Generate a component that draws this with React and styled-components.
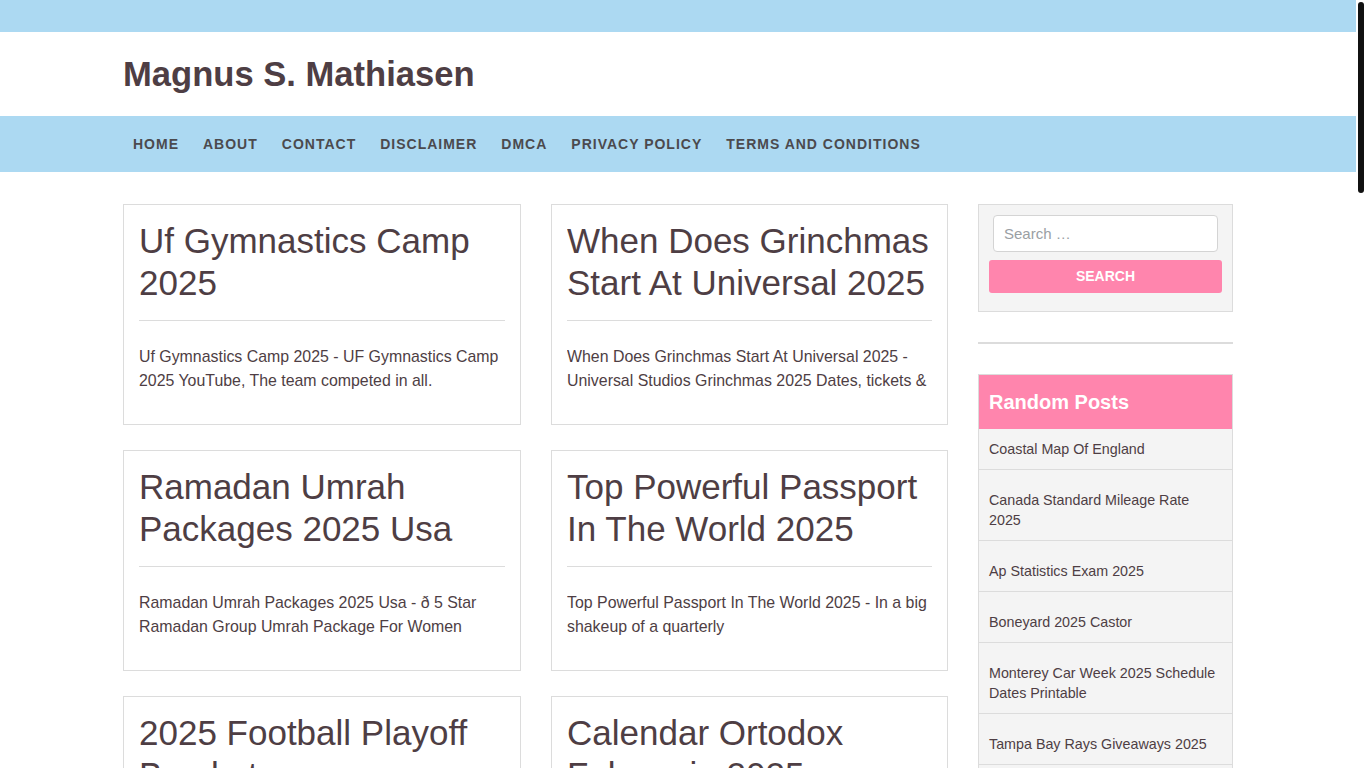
import React from "react";
import styled, { createGlobalStyle } from "styled-components";

const GlobalStyle = createGlobalStyle`
  html { background: #fff; }
  body {
    margin: 0 10px 0 0;
    font-family: "Liberation Sans", Arial, Helvetica, sans-serif;
    color: #4e3e44;
    background: #fff;
  }
  * { box-sizing: border-box; }
`;

const ScrollRail = styled.div`
  position: fixed;
  top: 0;
  right: 0;
  width: 10px;
  height: 100vh;
  background: #fff;
  z-index: 10;
`;

const ScrollThumb = styled.div`
  position: absolute;
  top: 2px;
  left: 2px;
  width: 6px;
  height: 191px;
  border-radius: 3px;
  background: #111;
`;

const Page = styled.div`
  min-height: 3025px;
  display: flex;
  flex-direction: column;
`;

const TopBar = styled.div`
  height: 32px;
  background: #acd9f2;
`;

const Container = styled.div`
  max-width: 1140px;
  margin: 0 auto;
  padding: 0 15px;
  width: 100%;
`;

const Header = styled.header`
  height: 84px;
  background: #fff;
  display: flex;
  align-items: center;
`;

const SiteTitle = styled.a`
  font-size: 34.6px;
  font-weight: 700;
  color: #4e3e44;
  text-decoration: none;
  line-height: 1;
  display: inline-block;
`;

const NavBar = styled.nav`
  height: 56px;
  background: #acd9f2;
  display: flex;
  align-items: center;
`;

const NavList = styled.ul`
  list-style: none;
  margin: 0;
  padding: 0;
  display: flex;
  gap: 4px;
`;

const NavItem = styled.li`
  a {
    display: block;
    padding: 0 10px;
    font-size: 14px;
    font-weight: 700;
    letter-spacing: 1px;
    text-transform: uppercase;
    color: #4b4a4e;
    text-decoration: none;
    line-height: 56px;
  }
`;

const Main = styled.div`
  padding-top: 32px;
  flex: 1;
`;

const Layout = styled.div`
  display: grid;
  grid-template-columns: 825px 255px;
  column-gap: 30px;
  align-items: start;
`;

const PostGrid = styled.div`
  display: grid;
  grid-template-columns: 398px 397px;
  column-gap: 30px;
  row-gap: 25px;
`;

const Card = styled.article`
  border: 1px solid #dcdcdc;
  background: #fff;
  padding: 15px;
`;

const CardTitle = styled.h2`
  margin: 0;
  font-size: 35px;
  font-weight: 400;
  line-height: 42px;
  color: #4e3e44;
  height: 84px;
  overflow: hidden;
`;

const Divider = styled.hr`
  border: 0;
  border-top: 1px solid #dcdcdc;
  margin: 16px 0 24px;
  height: 0;
`;

const Excerpt = styled.p`
  margin: 0 0 16px;
  font-size: 15.9px;
  line-height: 24px;
  color: #4e3e44;
  height: 48px;
  overflow: hidden;
`;

const Sidebar = styled.aside`
  display: flex;
  flex-direction: column;
`;

const SearchBox = styled.div`
  background: #f4f4f4;
  border: 1px solid #dcdcdc;
  padding: 10px 10px 18px;
`;

const SearchInput = styled.input`
  display: block;
  width: calc(100% - 8px);
  margin: 0 4px 8px;
  height: 37px;
  border: 1px solid #d4d4d4;
  border-radius: 4px;
  background: #fff;
  padding: 0 10px;
  font-family: "Liberation Sans", Arial, sans-serif;
  font-size: 15px;
  color: #555;
  &::placeholder { color: #9aa0a4; }
`;

const SearchButton = styled.button`
  display: block;
  width: 100%;
  height: 33px;
  border: 0;
  border-radius: 3px;
  background: #ff85ad;
  color: #fff;
  font-family: "Liberation Sans", Arial, sans-serif;
  font-size: 14px;
  font-weight: 700;
  line-height: 33px;
  padding: 0;
  text-transform: uppercase;
  cursor: pointer;
`;

const Rule = styled.div`
  height: 2px;
  background: #dcdcdc;
  margin: 30px 0;
`;

const Widget = styled.section`
  border: 1px solid #dcdcdc;
  background: #f4f4f4;
`;

const WidgetTitle = styled.h3`
  margin: 0;
  background: #ff85ad;
  color: #fff;
  font-size: 20px;
  font-weight: 700;
  line-height: 54px;
  padding: 0 10px;
`;

const PostList = styled.ul`
  list-style: none;
  margin: 0;
  padding: 0;
`;

const PostItem = styled.li`
  padding: ${(p) => (p.$first ? "10px 10px 10px" : "20px 10px 10px")};
  border-bottom: 1px solid #dcdcdc;
  font-size: 14.3px;
  line-height: 20px;
  a {
    color: #4e3e44;
    text-decoration: none;
  }
`;

const navItems = [
  "Home",
  "About",
  "Contact",
  "Disclaimer",
  "DMCA",
  "Privacy Policy",
  "Terms and Conditions",
];

const posts = [
  {
    title: "Uf Gymnastics Camp 2025",
    excerpt:
      "Uf Gymnastics Camp 2025 - UF Gymnastics Camp 2025 YouTube, The team competed in all.",
  },
  {
    title: "When Does Grinchmas Start At Universal 2025",
    excerpt:
      "When Does Grinchmas Start At Universal 2025 - Universal Studios Grinchmas 2025 Dates, tickets & more",
  },
  {
    title: "Ramadan Umrah Packages 2025 Usa",
    excerpt:
      "Ramadan Umrah Packages 2025 Usa - ð 5 Star Ramadan Group Umrah Package For Women",
  },
  {
    title: "Top Powerful Passport In The World 2025",
    excerpt:
      "Top Powerful Passport In The World 2025 - In a big shakeup of a quarterly",
  },
  {
    title: "2025 Football Playoff Bracket",
    excerpt:
      "2025 Football Playoff Bracket - College Football Playoff 2025 bracket, schedule and more",
  },
  {
    title: "Calendar Ortodox Februarie 2025",
    excerpt:
      "Calendar Ortodox Februarie 2025 - Calendar ortodox februarie 2025 sărbători",
  },
  {
    title: "Nfl Draft 2025 Mock Draft",
    excerpt:
      "Nfl Draft 2025 Mock Draft - The latest projections for the first round picks",
  },
  {
    title: "Best Family Cars 2025 Uk",
    excerpt:
      "Best Family Cars 2025 Uk - The best family cars to buy right now, reviewed",
  },
];

const randomPosts = [
  "Coastal Map Of England",
  "Canada Standard Mileage Rate 2025",
  "Ap Statistics Exam 2025",
  "Boneyard 2025 Castor",
  "Monterey Car Week 2025 Schedule Dates Printable",
  "Tampa Bay Rays Giveaways 2025",
  "Nba All Star Game 2025 Tickets",
  "Honda Civic 2025 Hybrid Price",
  "Easter Sunday 2025 Date",
  "Chelsea Flower Show 2025 Dates",
];

export default function App() {
  return (
    <>
      <GlobalStyle />
      <ScrollRail>
        <ScrollThumb />
      </ScrollRail>
      <Page>
        <TopBar />
        <Header>
          <Container>
            <SiteTitle href="#">Magnus S. Mathiasen</SiteTitle>
          </Container>
        </Header>
        <NavBar>
          <Container>
            <NavList>
              {navItems.map((n) => (
                <NavItem key={n}>
                  <a href="#">{n}</a>
                </NavItem>
              ))}
            </NavList>
          </Container>
        </NavBar>
        <Main>
          <Container>
            <Layout>
              <PostGrid>
                {posts.map((p) => (
                  <Card key={p.title}>
                    <CardTitle>{p.title}</CardTitle>
                    <Divider />
                    <Excerpt>{p.excerpt}</Excerpt>
                  </Card>
                ))}
              </PostGrid>
              <Sidebar>
                <SearchBox>
                  <SearchInput type="search" placeholder="Search …" />
                  <SearchButton type="button">Search</SearchButton>
                </SearchBox>
                <Rule />
                <Widget>
                  <WidgetTitle>Random Posts</WidgetTitle>
                  <PostList>
                    {randomPosts.map((r, i) => (
                      <PostItem key={r} $first={i === 0}>
                        <a href="#">{r}</a>
                      </PostItem>
                    ))}
                  </PostList>
                </Widget>
              </Sidebar>
            </Layout>
          </Container>
        </Main>
      </Page>
    </>
  );
}
